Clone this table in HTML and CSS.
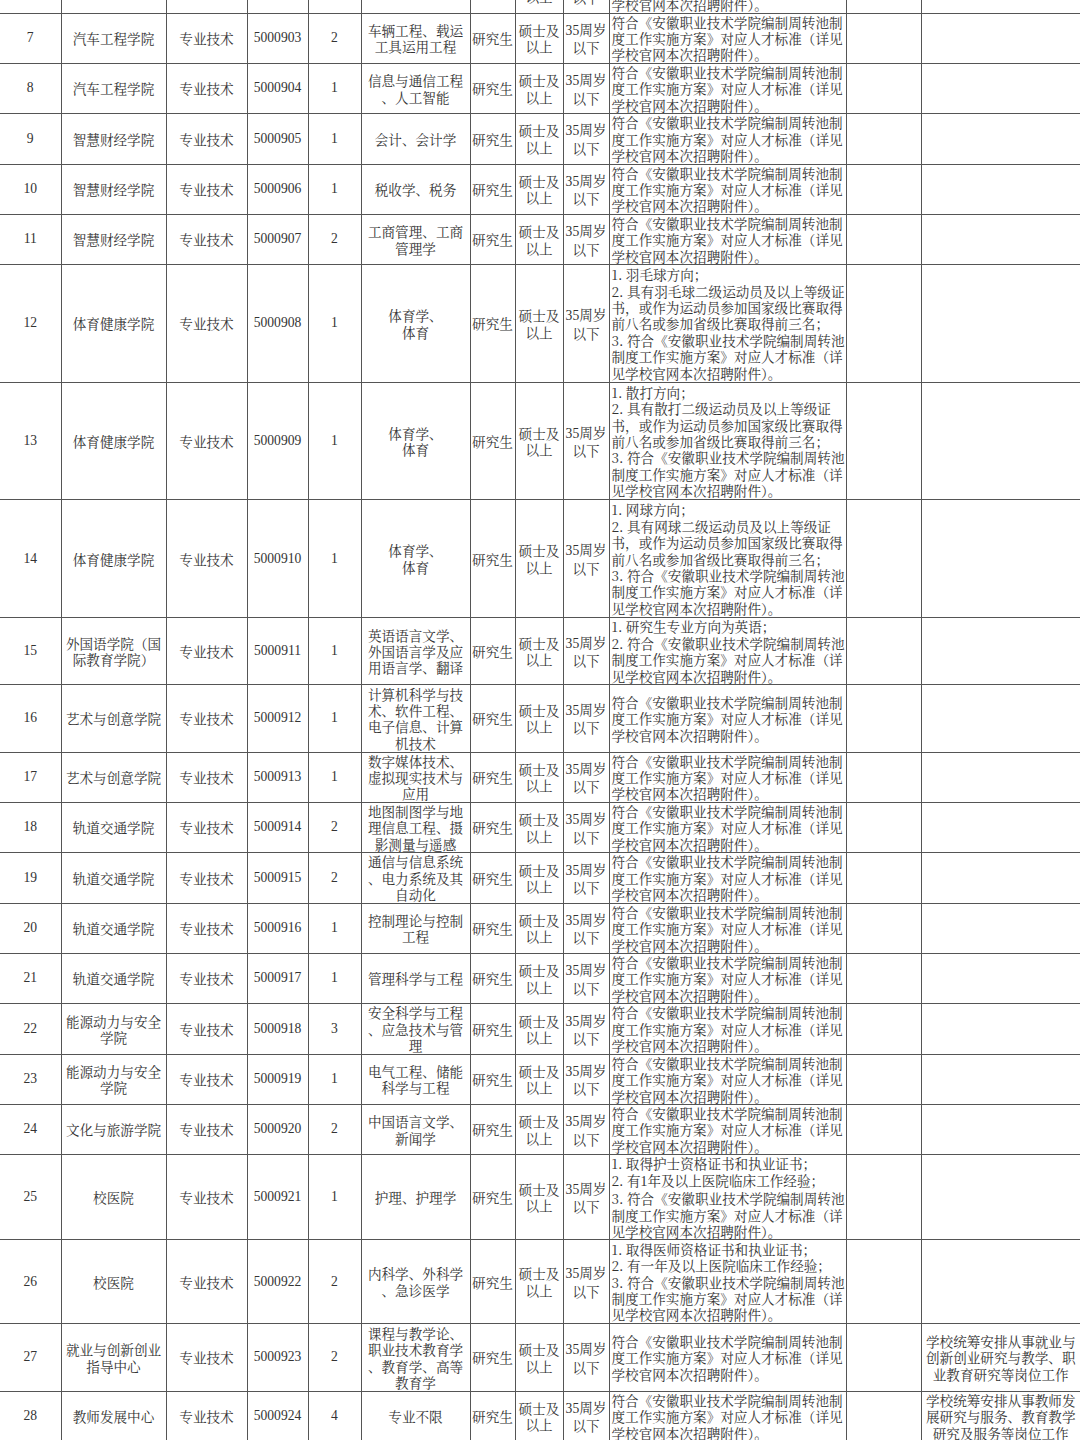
FILE: index.html
```html
<!DOCTYPE html>
<html lang="zh-CN">
<head>
<meta charset="utf-8">
<title>招聘岗位表</title>
<link rel="stylesheet" href="styles.css">
</head>
<body>
<table class="sheet">
<colgroup>
<col class="c1"><col class="c2"><col class="c3"><col class="c4"><col class="c5"><col class="c6"><col class="c7"><col class="c8"><col class="c9"><col class="c10"><col class="c11"><col class="c12">
</colgroup>
<tbody>
<tr class="l3"><td class="num">6</td><td>汽车工程学院</td><td>专业技术</td><td class="num">5000902</td><td class="num">1</td><td>机械工程</td><td>研究生</td><td>硕士及<br>以上</td><td><span class="num">35</span>周岁<br>以下</td><td class="req">符合《安徽职业技术学院编制周转池制<br>度工作实施方案》对应人才标准（详见<br>学校官网本次招聘附件）。</td><td></td><td></td></tr>
<tr class="l3"><td class="num">7</td><td>汽车工程学院</td><td>专业技术</td><td class="num">5000903</td><td class="num">2</td><td>车辆工程、载运<br>工具运用工程</td><td>研究生</td><td>硕士及<br>以上</td><td><span class="num">35</span>周岁<br>以下</td><td class="req">符合《安徽职业技术学院编制周转池制<br>度工作实施方案》对应人才标准（详见<br>学校官网本次招聘附件）。</td><td></td><td></td></tr>
<tr class="l3"><td class="num">8</td><td>汽车工程学院</td><td>专业技术</td><td class="num">5000904</td><td class="num">1</td><td>信息与通信工程<br>、人工智能</td><td>研究生</td><td>硕士及<br>以上</td><td><span class="num">35</span>周岁<br>以下</td><td class="req">符合《安徽职业技术学院编制周转池制<br>度工作实施方案》对应人才标准（详见<br>学校官网本次招聘附件）。</td><td></td><td></td></tr>
<tr class="l3"><td class="num">9</td><td>智慧财经学院</td><td>专业技术</td><td class="num">5000905</td><td class="num">1</td><td>会计、会计学</td><td>研究生</td><td>硕士及<br>以上</td><td><span class="num">35</span>周岁<br>以下</td><td class="req">符合《安徽职业技术学院编制周转池制<br>度工作实施方案》对应人才标准（详见<br>学校官网本次招聘附件）。</td><td></td><td></td></tr>
<tr class="l3"><td class="num">10</td><td>智慧财经学院</td><td>专业技术</td><td class="num">5000906</td><td class="num">1</td><td>税收学、税务</td><td>研究生</td><td>硕士及<br>以上</td><td><span class="num">35</span>周岁<br>以下</td><td class="req">符合《安徽职业技术学院编制周转池制<br>度工作实施方案》对应人才标准（详见<br>学校官网本次招聘附件）。</td><td></td><td></td></tr>
<tr class="l3"><td class="num">11</td><td>智慧财经学院</td><td>专业技术</td><td class="num">5000907</td><td class="num">2</td><td>工商管理、工商<br>管理学</td><td>研究生</td><td>硕士及<br>以上</td><td><span class="num">35</span>周岁<br>以下</td><td class="req">符合《安徽职业技术学院编制周转池制<br>度工作实施方案》对应人才标准（详见<br>学校官网本次招聘附件）。</td><td></td><td></td></tr>
<tr class="l7"><td class="num">12</td><td>体育健康学院</td><td>专业技术</td><td class="num">5000908</td><td class="num">1</td><td>体育学、<br>体育</td><td>研究生</td><td>硕士及<br>以上</td><td><span class="num">35</span>周岁<br>以下</td><td class="req">1. 羽毛球方向；<br>2. 具有羽毛球二级运动员及以上等级证<br>书，或作为运动员参加国家级比赛取得<br>前八名或参加省级比赛取得前三名；<br>3. 符合《安徽职业技术学院编制周转池<br>制度工作实施方案》对应人才标准（详<br>见学校官网本次招聘附件）。</td><td></td><td></td></tr>
<tr class="l7"><td class="num">13</td><td>体育健康学院</td><td>专业技术</td><td class="num">5000909</td><td class="num">1</td><td>体育学、<br>体育</td><td>研究生</td><td>硕士及<br>以上</td><td><span class="num">35</span>周岁<br>以下</td><td class="req">1. 散打方向；<br>2. 具有散打二级运动员及以上等级证<br>书，或作为运动员参加国家级比赛取得<br>前八名或参加省级比赛取得前三名；<br>3. 符合《安徽职业技术学院编制周转池<br>制度工作实施方案》对应人才标准（详<br>见学校官网本次招聘附件）。</td><td></td><td></td></tr>
<tr class="l7"><td class="num">14</td><td>体育健康学院</td><td>专业技术</td><td class="num">5000910</td><td class="num">1</td><td>体育学、<br>体育</td><td>研究生</td><td>硕士及<br>以上</td><td><span class="num">35</span>周岁<br>以下</td><td class="req">1. 网球方向；<br>2. 具有网球二级运动员及以上等级证<br>书，或作为运动员参加国家级比赛取得<br>前八名或参加省级比赛取得前三名；<br>3. 符合《安徽职业技术学院编制周转池<br>制度工作实施方案》对应人才标准（详<br>见学校官网本次招聘附件）。</td><td></td><td></td></tr>
<tr class="l4"><td class="num">15</td><td>外国语学院（国<br>际教育学院）</td><td>专业技术</td><td class="num">5000911</td><td class="num">1</td><td>英语语言文学、<br>外国语言学及应<br>用语言学、翻译</td><td>研究生</td><td>硕士及<br>以上</td><td><span class="num">35</span>周岁<br>以下</td><td class="req">1. 研究生专业方向为英语；<br>2. 符合《安徽职业技术学院编制周转池<br>制度工作实施方案》对应人才标准（详<br>见学校官网本次招聘附件）。</td><td></td><td></td></tr>
<tr class="l4"><td class="num">16</td><td>艺术与创意学院</td><td>专业技术</td><td class="num">5000912</td><td class="num">1</td><td>计算机科学与技<br>术、软件工程、<br>电子信息、计算<br>机技术</td><td>研究生</td><td>硕士及<br>以上</td><td><span class="num">35</span>周岁<br>以下</td><td class="req">符合《安徽职业技术学院编制周转池制<br>度工作实施方案》对应人才标准（详见<br>学校官网本次招聘附件）。</td><td></td><td></td></tr>
<tr class="l3"><td class="num">17</td><td>艺术与创意学院</td><td>专业技术</td><td class="num">5000913</td><td class="num">1</td><td>数字媒体技术、<br>虚拟现实技术与<br>应用</td><td>研究生</td><td>硕士及<br>以上</td><td><span class="num">35</span>周岁<br>以下</td><td class="req">符合《安徽职业技术学院编制周转池制<br>度工作实施方案》对应人才标准（详见<br>学校官网本次招聘附件）。</td><td></td><td></td></tr>
<tr class="l3"><td class="num">18</td><td>轨道交通学院</td><td>专业技术</td><td class="num">5000914</td><td class="num">2</td><td>地图制图学与地<br>理信息工程、摄<br>影测量与遥感</td><td>研究生</td><td>硕士及<br>以上</td><td><span class="num">35</span>周岁<br>以下</td><td class="req">符合《安徽职业技术学院编制周转池制<br>度工作实施方案》对应人才标准（详见<br>学校官网本次招聘附件）。</td><td></td><td></td></tr>
<tr class="l3"><td class="num">19</td><td>轨道交通学院</td><td>专业技术</td><td class="num">5000915</td><td class="num">2</td><td>通信与信息系统<br>、电力系统及其<br>自动化</td><td>研究生</td><td>硕士及<br>以上</td><td><span class="num">35</span>周岁<br>以下</td><td class="req">符合《安徽职业技术学院编制周转池制<br>度工作实施方案》对应人才标准（详见<br>学校官网本次招聘附件）。</td><td></td><td></td></tr>
<tr class="l3"><td class="num">20</td><td>轨道交通学院</td><td>专业技术</td><td class="num">5000916</td><td class="num">1</td><td>控制理论与控制<br>工程</td><td>研究生</td><td>硕士及<br>以上</td><td><span class="num">35</span>周岁<br>以下</td><td class="req">符合《安徽职业技术学院编制周转池制<br>度工作实施方案》对应人才标准（详见<br>学校官网本次招聘附件）。</td><td></td><td></td></tr>
<tr class="l3"><td class="num">21</td><td>轨道交通学院</td><td>专业技术</td><td class="num">5000917</td><td class="num">1</td><td>管理科学与工程</td><td>研究生</td><td>硕士及<br>以上</td><td><span class="num">35</span>周岁<br>以下</td><td class="req">符合《安徽职业技术学院编制周转池制<br>度工作实施方案》对应人才标准（详见<br>学校官网本次招聘附件）。</td><td></td><td></td></tr>
<tr class="l3"><td class="num">22</td><td>能源动力与安全<br>学院</td><td>专业技术</td><td class="num">5000918</td><td class="num">3</td><td>安全科学与工程<br>、应急技术与管<br>理</td><td>研究生</td><td>硕士及<br>以上</td><td><span class="num">35</span>周岁<br>以下</td><td class="req">符合《安徽职业技术学院编制周转池制<br>度工作实施方案》对应人才标准（详见<br>学校官网本次招聘附件）。</td><td></td><td></td></tr>
<tr class="l3"><td class="num">23</td><td>能源动力与安全<br>学院</td><td>专业技术</td><td class="num">5000919</td><td class="num">1</td><td>电气工程、储能<br>科学与工程</td><td>研究生</td><td>硕士及<br>以上</td><td><span class="num">35</span>周岁<br>以下</td><td class="req">符合《安徽职业技术学院编制周转池制<br>度工作实施方案》对应人才标准（详见<br>学校官网本次招聘附件）。</td><td></td><td></td></tr>
<tr class="l3"><td class="num">24</td><td>文化与旅游学院</td><td>专业技术</td><td class="num">5000920</td><td class="num">2</td><td>中国语言文学、<br>新闻学</td><td>研究生</td><td>硕士及<br>以上</td><td><span class="num">35</span>周岁<br>以下</td><td class="req">符合《安徽职业技术学院编制周转池制<br>度工作实施方案》对应人才标准（详见<br>学校官网本次招聘附件）。</td><td></td><td></td></tr>
<tr class="l5"><td class="num">25</td><td>校医院</td><td>专业技术</td><td class="num">5000921</td><td class="num">1</td><td>护理、护理学</td><td>研究生</td><td>硕士及<br>以上</td><td><span class="num">35</span>周岁<br>以下</td><td class="req">1. 取得护士资格证书和执业证书；<br>2. 有<span class="num">1</span>年及以上医院临床工作经验；<br>3. 符合《安徽职业技术学院编制周转池<br>制度工作实施方案》对应人才标准（详<br>见学校官网本次招聘附件）。</td><td></td><td></td></tr>
<tr class="l5"><td class="num">26</td><td>校医院</td><td>专业技术</td><td class="num">5000922</td><td class="num">2</td><td>内科学、外科学<br>、急诊医学</td><td>研究生</td><td>硕士及<br>以上</td><td><span class="num">35</span>周岁<br>以下</td><td class="req">1. 取得医师资格证书和执业证书；<br>2. 有一年及以上医院临床工作经验；<br>3. 符合《安徽职业技术学院编制周转池<br>制度工作实施方案》对应人才标准（详<br>见学校官网本次招聘附件）。</td><td></td><td></td></tr>
<tr class="l4"><td class="num">27</td><td>就业与创新创业<br>指导中心</td><td>专业技术</td><td class="num">5000923</td><td class="num">2</td><td>课程与教学论、<br>职业技术教育学<br>、教育学、高等<br>教育学</td><td>研究生</td><td>硕士及<br>以上</td><td><span class="num">35</span>周岁<br>以下</td><td class="req">符合《安徽职业技术学院编制周转池制<br>度工作实施方案》对应人才标准（详见<br>学校官网本次招聘附件）。</td><td></td><td>学校统筹安排从事就业与<br>创新创业研究与教学、职<br>业教育研究等岗位工作</td></tr>
<tr class="l3"><td class="num">28</td><td>教师发展中心</td><td>专业技术</td><td class="num">5000924</td><td class="num">4</td><td>专业不限</td><td>研究生</td><td>硕士及<br>以上</td><td><span class="num">35</span>周岁<br>以下</td><td class="req">符合《安徽职业技术学院编制周转池制<br>度工作实施方案》对应人才标准（详见<br>学校官网本次招聘附件）。</td><td></td><td>学校统筹安排从事教师发<br>展研究与服务、教育教学<br>研究及服务等岗位工作</td></tr>
</tbody>
</table>
</body>
</html>
```

FILE: styles.css
```css
html, body {
  margin: 0;
  padding: 0;
  background: #ffffff;
}

body {
  overflow: hidden;
}

.sheet {
  border-collapse: collapse;
  table-layout: fixed;
  width: 1080px;
  margin-top: -37.85px;
  font-family: "Noto Serif CJK SC", "Noto Sans CJK SC", sans-serif;
  font-size: 13.6px;
  line-height: 16.4px;
  color: #333333;
}

.c1 { width: 61px; }
.c2 { width: 105px; }
.c3 { width: 81px; }
.c4 { width: 61px; }
.c5 { width: 53px; }
.c6 { width: 109px; }
.c7 { width: 45px; }
.c8 { width: 48px; }
.c9 { width: 46px; }
.c10 { width: 237px; }
.c11 { width: 75px; }
.c12 { width: 159px; }

.sheet td {
  border: 1px solid #555555;
  padding: 0;
  text-align: center;
  vertical-align: middle;
  white-space: nowrap;
  overflow: hidden;
}

.sheet td:first-child {
  border-left: none;
}

.sheet td:last-child {
  border-right: none;
}

.sheet td.req {
  text-align: left;
  padding-left: 2px;
}

.num {
  font-family: "Liberation Serif", "Noto Sans CJK SC", serif;
}

.l3 { height: 50.35px; }
.l4 { height: 67.3px; }
.l5 { height: 84px; }
.l7 { height: 117.6px; }
```
